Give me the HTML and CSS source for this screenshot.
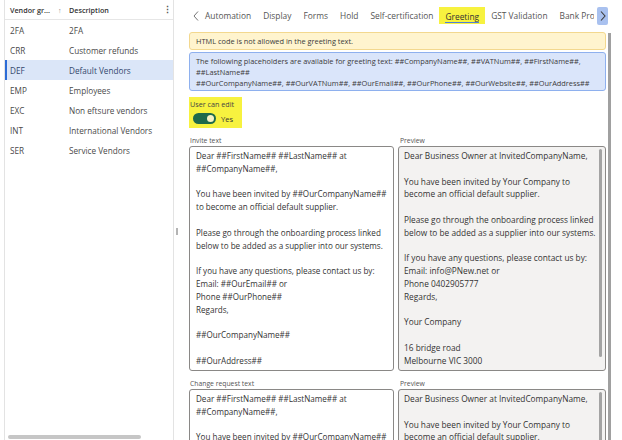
FILE: index.html
```html
<!DOCTYPE html>
<html lang="en">
<head>
<meta charset="utf-8">
<title>Vendor groups - Greeting</title>
<link rel="stylesheet" href="styles.css">
</head>
<body>
<div class="app">
  <aside class="list">
    <div class="list-head">
      <span class="c1">Vendor gr... <span class="sort">↑</span></span>
      <span class="c2">Description</span>
      <span class="kebab">⋮</span>
    </div>
    <div class="row"><span class="c1">2FA</span><span class="c2">2FA</span></div>
    <div class="row"><span class="c1">CRR</span><span class="c2">Customer refunds</span></div>
    <div class="row sel"><span class="c1">DEF</span><span class="c2">Default Vendors</span></div>
    <div class="row"><span class="c1">EMP</span><span class="c2">Employees</span></div>
    <div class="row"><span class="c1">EXC</span><span class="c2">Non eftsure vendors</span></div>
    <div class="row"><span class="c1">INT</span><span class="c2">International Vendors</span></div>
    <div class="row"><span class="c1">SER</span><span class="c2">Service Vendors</span></div>
    <div class="hscroll"></div>
  </aside>
  <div class="splitter"><span class="grip"></span></div>
  <main class="detail">
    <nav class="tabs">
      <svg class="prev" width="6" height="10" viewBox="0 0 6 10"><path d="M5 0.5 L1 5 L5 9.5" fill="none" stroke="#666" stroke-width="0.9"/></svg>
      <div class="tablist">
        <span class="tab">Automation</span>
        <span class="tab">Display</span>
        <span class="tab">Forms</span>
        <span class="tab">Hold</span>
        <span class="tab">Self-certification</span>
        <span class="tab active"><span class="tab-label">Greeting</span></span>
        <span class="tab">GST Validation</span>
        <span class="tab">Bank Proof</span>
      </div>
      <span class="next"><svg width="6" height="10" viewBox="0 0 6 10"><path d="M1 0.5 L5 5 L1 9.5" fill="none" stroke="#3a3a3a" stroke-width="1.1"/></svg></span>
    </nav>
    <div class="body">
      <div class="content">
        <div class="msg warn">HTML code is not allowed in the greeting text.</div>
        <div class="msg info">The following placeholders are available for greeting text: ##CompanyName##, ##VATNum##, ##FirstName##,<br>##LastName##<br>##OurCompanyName##, ##OurVATNum##, ##OurEmail##, ##OurPhone##, ##OurWebsite##, ##OurAddress##</div>
        <div class="edit-field">
          <div class="field-label">User can edit</div>
          <div class="toggle-row"><span class="toggle"><span class="knob"></span></span><span class="toggle-text">Yes</span></div>
        </div>
        <div class="pair">
          <div class="col">
            <div class="label">Invite text</div>
            <div class="textbox"><div class="text">Dear ##FirstName## ##LastName## at
##CompanyName##,

You have been invited by ##OurCompanyName##
to become an official default supplier.

Please go through the onboarding process linked
below to be added as a supplier into our systems.

If you have any questions, please contact us by:
Email: ##OurEmail## or
Phone ##OurPhone##
Regards,

##OurCompanyName##

##OurAddress##</div></div>
          </div>
          <div class="col">
            <div class="label pv">Preview</div>
            <div class="textbox preview"><div class="text">Dear Business Owner at InvitedCompanyName,

You have been invited by Your Company to
become an official default supplier.

Please go through the onboarding process linked
below to be added as a supplier into our systems.

If you have any questions, please contact us by:
Email: info@PNew.net or
Phone 0402905777
Regards,

Your Company

16 bridge road
Melbourne VIC 3000
AUS</div><span class="inner-scroll"></span></div>
          </div>
        </div>
        <div class="pair second">
          <div class="col">
            <div class="label">Change request text</div>
            <div class="textbox"><div class="text">Dear ##FirstName## ##LastName## at
##CompanyName##,

You have been invited by ##OurCompanyName##
to become an official default supplier.</div></div>
          </div>
          <div class="col">
            <div class="label pv">Preview</div>
            <div class="textbox preview"><div class="text">Dear Business Owner at InvitedCompanyName,

You have been invited by Your Company to
become an official default supplier.</div><span class="inner-scroll"></span></div>
          </div>
        </div>
      </div>
      <div class="vscroll"></div>
    </div>
  </main>
</div>
</body>
</html>
```
FILE: styles.css
```css
* { box-sizing: border-box; }
html, body { margin: 0; padding: 0; background: #fff; }
body {
  font-family: "Open Sans", "Noto Sans", sans-serif;
  color: #323130;
  width: 622px;
  height: 440px;
  overflow: hidden;
}
.app { display: flex; height: 440px; overflow: hidden; }

/* left list */
.list {
  margin-left: 4px;
  width: 170px;
  border-left: 1px solid #e3e3e3;
  border-right: 1px solid #e3e3e3;
  display: flex;
  flex-direction: column;
  flex: none;
}
.list-head {
  height: 20px;
  border-bottom: 1px solid #e6e6e6;
  display: flex;
  align-items: center;
  font-size: 7.2px;
  font-weight: 600;
  color: #333;
}
.c1 { width: 64px; padding-left: 5px; flex: none; white-space: nowrap; }
.c2 { flex: 1; white-space: nowrap; }
.sort { font-weight: 400; color: #888; margin-left: 6px; font-size: 7px; }
.kebab { width: 10px; font-size: 9px; color: #555; font-weight: 700; }
.row {
  height: 20px;
  display: flex;
  align-items: center;
  font-size: 8.2px;
  color: #4a4a4a;
}
.row.sel {
  background: #dbe6f8;
  box-shadow: inset 2px 0 0 #2b6bd6;
  color: #33486e;
}
.hscroll {
  margin-top: auto;
  margin-left: 3px;
  margin-bottom: 1px;
  width: 133px;
  height: 4px;
  border-radius: 2px;
  background: #c6c6c6;
}

/* splitter */
.splitter { width: 7px; flex: none; display: flex; flex-direction: column; padding-top: 228px; padding-left: 2px; }
.grip { width: 2px; height: 7px; background: #b4b4b4; }

/* detail */
.detail { flex: 1; min-width: 0; display: flex; flex-direction: column; }
.tabs {
  height: 31px;
  flex: none;
  display: flex;
  align-items: center;
}
.prev { margin-left: 12px; flex: none; }
.tablist {
  flex: 1;
  min-width: 0;
  overflow: hidden;
  display: flex;
  align-items: center;
  white-space: nowrap;
}
.tab {
  padding: 0 6px;
  height: 17px;
  display: flex;
  align-items: center;
  font-size: 8.4px;
  color: #555;
  flex: none;
}
.tab.active { background: #f7f23f; color: #333; }
.tab-label { border-bottom: 1.5px solid #4f7fd9; line-height: 11px; padding-top: 2px; }
.next {
  flex: none;
  width: 11px;
  height: 18px;
  margin-left: 3px;
  margin-right: 14px;
  background: #a9c1ef;
  border-radius: 2px;
  display: flex;
  align-items: center;
  justify-content: center;
}

.body { flex: 1; min-height: 0; display: flex; overflow: hidden; }
.content { width: 417px; flex: none; margin-left: 8px; overflow: hidden; }
.vscroll { width: 3px; margin-left: 2px; margin-top: 2px; background: #a0a0a0; flex: none; }

.msg {
  border-radius: 3px;
  border: 1px solid;
  font-size: 7.4px;
  color: #3a3a3a;
  white-space: nowrap;
  padding: 0 6px;
}
.warn {
  margin-top: 1px;
  height: 18px;
  line-height: 16px;
  background: #fff4ce;
  border-color: #f3d88e;
}
.info {
  margin-top: 2px;
  height: 39px;
  line-height: 11px;
  padding-top: 3px;
  background: #dae5fa;
  border-color: #8eb0ee;
}

.edit-field {
  margin-top: 6px;
  margin-left: -1px;
  width: 54px;
  height: 31px;
  background: #f7f23f;
  padding: 2px 0 0 2px;
}
.field-label { font-size: 7.2px; color: #444; line-height: 10px; }
.toggle-row { display: flex; align-items: center; margin-top: 4px; padding-left: 3px; }
.toggle {
  width: 23px;
  height: 11px;
  border-radius: 6px;
  background: #1e6a4b;
  display: flex;
  align-items: center;
  justify-content: flex-end;
  padding-right: 2px;
}
.knob { width: 7px; height: 7px; border-radius: 50%; background: #f6f1c4; }
.toggle-text { font-size: 7.6px; color: #333; margin-left: 5px; }

.pair {
  display: grid;
  grid-template-columns: 205px 208px;
  column-gap: 4px;
  margin-top: 7px;
}
.pair.second { margin-top: 7px; }
.label { font-size: 6.8px; color: #555; line-height: 11px; padding-left: 1px; }
.label.pv { padding-left: 2px; }
.textbox {
  height: 225px;
  border: 1px solid #8a8886;
  border-radius: 3px;
  background: #fff;
  overflow: hidden;
  display: flex;
}
.text {
  flex: 1;
  min-width: 0;
  white-space: pre;
  font-size: 8.1px;
  line-height: 12.8px;
  padding: 3px 0 0 6px;
  color: #333;
  overflow: hidden;
}
.preview { background: #f3f2f1; }
.preview .text { padding-left: 5px; font-size: 8.3px; }
.inner-scroll {
  flex: none;
  width: 3px;
  margin: 2px 3px 13px 0;
  border-radius: 2px;
  background: #a3a3a3;
}
```
